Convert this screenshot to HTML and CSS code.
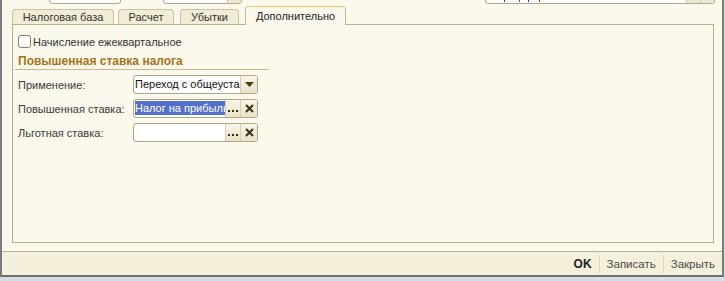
FILE: index.html
```html
<!DOCTYPE html>
<html lang="ru">
<head>
<meta charset="utf-8">
<link rel="stylesheet" href="styles.css">
</head>
<body>
<div class="window">
  <div class="topfields">
    <div class="tf tf1"></div>
    <div class="tf tf2"><span class="tf-fill"></span><span class="tf-btn"></span></div>
    <div class="tf tf3"><span class="tf-fill"><span class="mark blue m1"></span><span class="mark red m2"></span><span class="mark blue m3"></span><span class="mark red m4"></span></span><span class="tf-btn"></span><span class="tf-btn"></span></div>
  </div>
  <div class="tabs">
    <div class="tab t1">Налоговая база</div>
    <div class="tab t2">Расчет</div>
    <div class="tab t3">Убытки</div>
    <div class="tab t4 active">Дополнительно</div>
  </div>
  <div class="panel">
    <label class="check"><span class="box"></span><span>Начисление ежеквартальное</span></label>
    <div class="section">Повышенная ставка налога</div>
    <div class="form">
      <div class="label">Применение:</div>
      <div class="field">
        <span class="value">Переход с общеустановленной ставки</span>
        <span class="btn drop"><svg width="9" height="5" viewBox="0 0 9 5"><path d="M0 0H9L4.5 5Z" fill="#4b3a12"/></svg></span>
      </div>
      <div class="label">Повышенная ставка:</div>
      <div class="field">
        <span class="value"><span class="sel">Налог на прибыль</span></span>
        <span class="btn dots"><svg width="11" height="3" viewBox="0 0 11 3"><rect x="0" y="0" width="2" height="2" fill="#3a2e10"/><rect x="4" y="0" width="2" height="2" fill="#3a2e10"/><rect x="8" y="0" width="2" height="2" fill="#3a2e10"/></svg></span>
        <span class="btn clear"><svg width="9" height="9" viewBox="0 0 9 9"><path d="M1 1L8 8M8 1L1 8" stroke="#3a2e10" stroke-width="2"/></svg></span>
      </div>
      <div class="label">Льготная ставка:</div>
      <div class="field">
        <span class="value"></span>
        <span class="btn dots"><svg width="11" height="3" viewBox="0 0 11 3"><rect x="0" y="0" width="2" height="2" fill="#3a2e10"/><rect x="4" y="0" width="2" height="2" fill="#3a2e10"/><rect x="8" y="0" width="2" height="2" fill="#3a2e10"/></svg></span>
        <span class="btn clear"><svg width="9" height="9" viewBox="0 0 9 9"><path d="M1 1L8 8M8 1L1 8" stroke="#3a2e10" stroke-width="2"/></svg></span>
      </div>
    </div>
  </div>
  <div class="footer">
    <span class="fbtn ok">OK</span>
    <span class="fsep"></span>
    <span class="fbtn">Записать</span>
    <span class="fsep"></span>
    <span class="fbtn">Закрыть</span>
  </div>
</div>
</body>
</html>
```
FILE: styles.css
```css
* { box-sizing: border-box; }
html, body { margin: 0; padding: 0; }
body {
  width: 725px;
  height: 281px;
  background: #d5dde5;
  font-family: "Liberation Sans", Arial, sans-serif;
  font-size: 11px;
  color: #333;
  overflow: hidden;
}
.window {
  width: 724px;
  height: 277px;
  background: #fbf9eb;
  border-left: 2px solid #7c7c7c;
  border-right: 2px solid #7c7c7c;
  border-bottom: 2px solid #6e6e6e;
  display: flex;
  flex-direction: column;
}
.topfields {
  height: 4px;
  overflow: hidden;
  display: flex;
  align-items: flex-end;
  flex: none;
}
.tf {
  height: 20px;
  border: 1px solid #b0a88a;
  border-radius: 3px;
  background: #fff;
  display: flex;
  overflow: hidden;
  flex: none;
}
.tf1 { margin-left: 47px; width: 72px; }
.tf2 { margin-left: 42px; width: 79px; }
.tf3 { margin-left: 243px; width: 230px; }
.tf-fill { flex: 1; display: flex; align-items: flex-end; padding-left: 18px; }
.mark { width: 1px; height: 2px; margin-bottom: 1px; }
.mark.blue { background: #2a44c8; }
.mark.red { background: #c82a2a; }
.m2 { margin-left: 14px; }
.m3 { margin-left: 8px; }
.m4 { margin-left: 10px; }
.tf-btn { width: 14px; border-left: 1px solid #cfc7a8; background: #ede8d4; }
.tabs {
  display: flex;
  align-items: flex-end;
  height: 21px;
  margin-bottom: -1px;
  padding-left: 10px;
  position: relative;
  z-index: 1;
  flex: none;
}
.tab {
  height: 15px;
  margin-bottom: 1px;
  line-height: 14px;
  text-align: center;
  border: 1px solid #c9c1a0;
  border-bottom: none;
  border-radius: 4px 4px 0 0;
  background: #f1ecd6;
  color: #333;
  white-space: nowrap;
}
.t1 { width: 102px; }
.t2 { width: 56px; margin-left: 4px; }
.t3 { width: 59px; margin-left: 6px; }
.t4 { width: 101px; margin-left: 6px; }
.tab.active {
  height: 19px;
  margin-bottom: 0;
  line-height: 18px;
  background: #fbf9eb;
  border-color: #c2b993;
  border-top: 1px solid #eec36a;
  color: #222;
}
.panel {
  margin-left: 10px;
  margin-right: 8px;
  height: 219px;
  border: 1px solid #b8af89;
  padding: 10px 0 0 5px;
  flex: none;
}
.check {
  display: flex;
  align-items: center;
  gap: 2px;
  height: 13px;
  color: #333;
}
.box {
  width: 13px;
  height: 13px;
  border: 1px solid #8a8168;
  border-radius: 3px;
  background: #fff;
}
.section {
  margin: 7px 0 0 -3px;
  width: 251px;
  padding-left: 3px;
  height: 14px;
  line-height: 13px;
  font-weight: bold;
  font-size: 12px;
  color: #a4741c;
  border-bottom: 1px solid #c6b988;
  box-sizing: content-box;
}
.form {
  margin-top: 5px;
  display: grid;
  grid-template-columns: 115px 125px;
  row-gap: 5px;
  align-items: center;
}
.label { color: #3a3a3a; white-space: nowrap; }
.field {
  height: 19px;
  border: 1px solid #aea585;
  border-radius: 3px;
  background: #fff;
  display: flex;
  overflow: hidden;
}
.value {
  flex: 1;
  min-width: 0;
  overflow: hidden;
  white-space: nowrap;
  line-height: 17px;
  padding-left: 1px;
  color: #111;
}
.sel {
  background: #5470c8;
  color: #fff;
  padding: 1px 0;
}
.btn {
  flex: none;
  display: flex;
  align-items: center;
  justify-content: center;
  background: linear-gradient(#f8f5e6, #e9e3c8);
  border-left: 1px solid #d6cfb2;
}
.drop { width: 17px; }
.dots { width: 15px; align-items: flex-end; padding-bottom: 4px; padding-left: 1px; }
.clear { width: 17px; }
.footer {
  margin-top: 8px;
  flex: 1;
  border-top: 1px solid #bab398;
  background: #f4f0dc;
  display: flex;
  justify-content: flex-end;
  align-items: center;
  padding-right: 7px;
  padding-top: 1px;
  gap: 7px;
}
.fbtn { color: #4a4a4a; font-size: 11.5px; }
.fbtn.ok { color: #222; font-weight: bold; font-size: 12px; }
.fsep { width: 1px; height: 18px; background: #ddd5b6; }
```
